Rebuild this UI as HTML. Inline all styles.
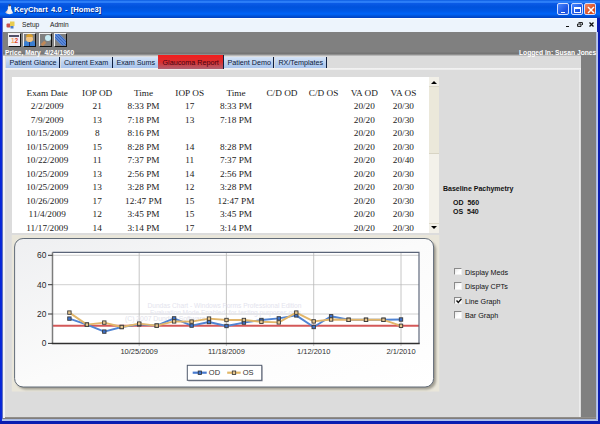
<!DOCTYPE html>
<html><head><meta charset="utf-8">
<style>
*{margin:0;padding:0;box-sizing:border-box}
html,body{width:600px;height:424px;overflow:hidden;background:#0a1cb0;font-family:"Liberation Sans",sans-serif}
.a{position:absolute}
#title{left:0;top:0;width:600px;height:18px;background:linear-gradient(#0c5ce0 0,#1e70f0 1px,#3a8cff 2px,#0a5ae6 3.5px,#0052dc 7px,#0058e6 11px,#0064f8 14px,#0052d8 16px,#0040c0 18px)}
#ttext{left:14px;top:5.3px;color:#fff;font-weight:bold;font-size:7.6px;word-spacing:1.2px;white-space:nowrap;text-shadow:1px 1px 0 #0a3090}
#lblue{left:0;top:18px;width:3px;height:403px;background:linear-gradient(90deg,#0424d8 0,#0a2ad8 1.5px,#6070c0 2.5px,#98a0b8 3px)}
#rblue{left:596px;top:31.5px;width:2px;height:389.5px;background:linear-gradient(90deg,#a8b8d8,#c0ccf8)}
#bblue{left:2px;top:419px;width:596px;height:2px;background:linear-gradient(#a8b8d8,#b0c4f4)}
#menu{left:3px;top:18px;width:594px;height:13.5px;background:#edf4fc}
#tool{left:3px;top:32px;width:593px;height:23px;background:linear-gradient(#808080 0,#808080 20px,#747474 21px,#767676 22px,#a8a8a8 23px)}
#strip{left:3px;top:55px;width:577.5px;height:13px;background:#dcdcdc}
#wline{left:3px;top:68px;width:577.5px;height:2px;background:linear-gradient(#f4f4f4,#ebebeb)}
#panel{left:3px;top:69px;width:577.5px;height:348px;background:#dcdcdc}
#pleft{left:3px;top:55.5px;width:2px;height:362px;background:#eeeeee}
#rgray{left:580.5px;top:55px;width:16px;height:364px;background:#808080}
#bgray{left:3px;top:417px;width:593px;height:2px;background:linear-gradient(#9a9690,#787676)}
.mt{font-size:6.6px;color:#1a1a1a;top:21.3px}
.tab{top:56.5px;height:11px;background:linear-gradient(#d6e4f8,#bcd2f0 50%,#a8c4ec);border-right:1.5px solid #102040;font-size:7.2px;color:#0a1838;line-height:12.6px;white-space:nowrap;padding-left:3.4px}
#table{left:12px;top:76.5px;width:417px;height:156px;background:#fff;overflow:hidden}
.td{position:absolute;width:80px;text-align:center;white-space:nowrap;font-family:"Liberation Serif",serif;font-size:9.25px;line-height:11px;color:#1a1a1a}
#sb{left:429px;top:76.5px;width:9.5px;height:156px;background:#f3f1ea}
.bp{font-size:7px;font-weight:bold;color:#111;white-space:nowrap}
.cb{left:454px;width:8px;height:7.5px;background:linear-gradient(135deg,#e8e8e8,#fff 60%);border-top:1px solid #8a8a8a;border-left:1px solid #8a8a8a;border-right:1px solid #f0f0f0;border-bottom:1px solid #f0f0f0}
.cbt{left:465px;font-size:7.2px;color:#111;white-space:nowrap}
.tbtn{top:3.2px;width:12px;height:12px;border:1px solid #d0dcff;border-radius:2px;background:linear-gradient(135deg,#4a88ff,#1a50e0 70%,#2a60e8)}
.ib{top:33px;width:13px;height:13.5px;border-top:1px solid #f0f0f0;border-left:1px solid #f0f0f0;border-right:1px solid #101010;border-bottom:1px solid #101010;overflow:hidden}
</style></head><body>
<div class="a" id="title"></div>
<svg class="a" style="left:3.5px;top:3.5px" width="10" height="11" viewBox="0 0 10 11"><path d="M5.5,1 C7,1.5 7.5,3 7,4.5 L9,9 C8,10.5 3,10.5 2,9 L4,4.5 C3.5,3 4,1.5 5.5,1Z" fill="#f4f2f0"/><path d="M4.5,0.5 C6,0 7,0.5 7,2 L4.5,2.5Z" fill="#404860"/><path d="M3.5,6 L1,8.5 L3,9Z" fill="#d8c0b8"/></svg>
<div class="a" id="ttext">KeyChart 4.0 - [Home3]</div>
<div class="a tbtn" style="left:557.2px"><div class="a" style="left:2.6px;top:7.4px;width:4px;height:1.8px;background:#fff"></div></div>
<div class="a tbtn" style="left:570.8px"><div class="a" style="left:1.8px;top:2.6px;width:7px;height:6.5px;border:1px solid #fff;border-top-width:2px"></div></div>
<div class="a tbtn" style="left:584px;background:linear-gradient(135deg,#f08868,#d84818 70%,#e05828)"><svg class="a" style="left:1.5px;top:2px" width="8" height="8" viewBox="0 0 8 8"><path d="M1,1 L7,7 M7,1 L1,7" stroke="#fff" stroke-width="1.5"/></svg></div>
<div class="a" id="menu"></div>
<div class="a" style="left:3px;top:18px;width:594px;height:1px;background:#fafcff"></div>
<div class="a" id="tool"></div>
<div class="a" id="strip"></div>
<div class="a" id="panel"></div>
<div class="a" id="wline"></div>
<div class="a" style="left:3px;top:55px;width:577.5px;height:1px;background:#b8b8b8"></div>
<div class="a" style="left:578.5px;top:69px;width:1.6px;height:349px;background:#ececec"></div>
<div class="a" id="rgray"></div>
<div class="a" id="bgray"></div>
<div class="a" id="lblue"></div>
<div class="a" style="left:3.3px;top:55.5px;width:1.6px;height:362.5px;background:#f2f2f2"></div>
<div class="a" id="rblue"></div>
<div class="a" id="bblue"></div>

<svg class="a" style="left:6px;top:20.5px" width="9" height="8" viewBox="0 0 9 8"><rect x="0.5" y="2.5" width="4" height="4" rx="1" fill="#c85050"/><rect x="4" y="0.5" width="4.5" height="4.5" fill="#e8cc50"/><rect x="4.5" y="5" width="3" height="2.5" fill="#4a7cc8"/></svg>
<div class="a mt" style="left:22px">Setup</div>
<div class="a mt" style="left:50px">Admin</div>
<div class="a" style="left:566px;top:25.8px;width:3px;height:1.4px;background:#111"></div>
<svg class="a" style="left:577px;top:22px" width="6" height="5" viewBox="0 0 6 5"><path d="M1.5,0.6 H5.4 V3 M0.6,2 H4 V4.4 H0.6Z" fill="none" stroke="#111" stroke-width="1"/></svg>
<svg class="a" style="left:589px;top:22px" width="5" height="5" viewBox="0 0 5 5"><path d="M0.5,0.5 L4.5,4.5 M4.5,0.5 L0.5,4.5" stroke="#111" stroke-width="1.3"/></svg>

<div class="a ib" style="left:7.6px;background:#f2eef6"><div class="a" style="left:0.5px;top:0.5px;width:10px;height:2px;background:#505068"></div><div class="a" style="left:2.5px;top:4px;font-size:6.5px;font-weight:bold;color:#f0a060;line-height:6px">1</div><div class="a" style="left:6px;top:4px;font-size:6.5px;font-weight:bold;color:#e04828;line-height:6px">2</div></div>
<div class="a ib" style="left:22.8px;background:#808080"><div class="a" style="left:0.5px;top:6.5px;width:10.5px;height:6px;border-radius:2px 2px 0 0;background:#3a7ed0"></div><div class="a" style="left:5px;top:7px;width:1.5px;height:5px;background:#203070"></div><div class="a" style="left:2.5px;top:1.5px;width:6.5px;height:6px;border-radius:3px;background:#f2c482"></div><div class="a" style="left:2px;top:0px;width:7.5px;height:2.8px;border-radius:3px 3px 0 0;background:#d8a030"></div></div>
<div class="a ib" style="left:38.8px;background:#808080"><div class="a" style="left:5px;top:1.2px;width:6px;height:6px;border-radius:50%;background:#c8ecf4"></div><div class="a" style="left:1px;top:7.5px;width:5px;height:3px;background:#c08858;transform:rotate(-45deg)"></div></div>
<div class="a ib" style="left:54px;background:#808080"><svg class="a" style="left:0;top:0" width="11" height="11.5" viewBox="0 0 11 11.5"><path d="M0,0 L4.5,0 L11,6.5 L11,11.5 L6.5,11.5 L0,5 Z" fill="#5a88d8"/><path d="M0.5,0.5 L11,11 M0,3 L8.5,11.5 M3,0 L11,8" stroke="#3060b8" stroke-width="0.8"/></svg></div>

<div class="a" style="left:5px;top:48.6px;color:#fff;font-weight:bold;font-size:6.6px;letter-spacing:0.05px;white-space:nowrap">Price, Mary&nbsp; 4/24/1960</div>
<div class="a" style="left:519px;top:48.5px;color:#fff;font-weight:bold;font-size:6.7px;white-space:nowrap">Logged In: Susan Jones</div>

<div class="a tab" style="left:6px;width:54px">Patient Glance</div>
<div class="a tab" style="left:60.5px;width:52px">Current Exam</div>
<div class="a tab" style="left:113px;width:45px;border-right:none">Exam Sums</div>
<div class="a tab" style="left:158px;top:55.3px;height:13.4px;width:66px;background:linear-gradient(#f41c1c,#d83030 50%,#b06070);color:#480010;line-height:15.8px;padding-left:4.5px">Glaucoma Report</div>
<div class="a tab" style="left:224px;width:50px">Patient Demo</div>
<div class="a tab" style="left:275px;width:52px">RX/Templates</div>

<div class="a" id="table">
<span class="td" style="left:-4.8px;top:11.00px">Exam Date</span>
<span class="td" style="left:45.2px;top:11.00px">IOP OD</span>
<span class="td" style="left:91.5px;top:11.00px">Time</span>
<span class="td" style="left:137.7px;top:11.00px">IOP OS</span>
<span class="td" style="left:184.0px;top:11.00px">Time</span>
<span class="td" style="left:230.0px;top:11.00px">C/D OD</span>
<span class="td" style="left:271.5px;top:11.00px">C/D OS</span>
<span class="td" style="left:312.3px;top:11.00px">VA OD</span>
<span class="td" style="left:351.4px;top:11.00px">VA OS</span>
<span class="td" style="left:-4.8px;top:24.50px">2/2/2009</span>
<span class="td" style="left:45.2px;top:24.50px">21</span>
<span class="td" style="left:91.5px;top:24.50px">8:33 PM</span>
<span class="td" style="left:137.7px;top:24.50px">17</span>
<span class="td" style="left:184.0px;top:24.50px">8:33 PM</span>
<span class="td" style="left:312.3px;top:24.50px">20/20</span>
<span class="td" style="left:351.4px;top:24.50px">20/30</span>
<span class="td" style="left:-4.8px;top:38.00px">7/9/2009</span>
<span class="td" style="left:45.2px;top:38.00px">13</span>
<span class="td" style="left:91.5px;top:38.00px">7:18 PM</span>
<span class="td" style="left:137.7px;top:38.00px">13</span>
<span class="td" style="left:184.0px;top:38.00px">7:18 PM</span>
<span class="td" style="left:312.3px;top:38.00px">20/20</span>
<span class="td" style="left:351.4px;top:38.00px">20/30</span>
<span class="td" style="left:-4.8px;top:51.50px">10/15/2009</span>
<span class="td" style="left:45.2px;top:51.50px">8</span>
<span class="td" style="left:91.5px;top:51.50px">8:16 PM</span>
<span class="td" style="left:312.3px;top:51.50px">20/20</span>
<span class="td" style="left:351.4px;top:51.50px">20/30</span>
<span class="td" style="left:-4.8px;top:65.00px">10/15/2009</span>
<span class="td" style="left:45.2px;top:65.00px">15</span>
<span class="td" style="left:91.5px;top:65.00px">8:28 PM</span>
<span class="td" style="left:137.7px;top:65.00px">14</span>
<span class="td" style="left:184.0px;top:65.00px">8:28 PM</span>
<span class="td" style="left:312.3px;top:65.00px">20/20</span>
<span class="td" style="left:351.4px;top:65.00px">20/30</span>
<span class="td" style="left:-4.8px;top:78.50px">10/22/2009</span>
<span class="td" style="left:45.2px;top:78.50px">11</span>
<span class="td" style="left:91.5px;top:78.50px">7:37 PM</span>
<span class="td" style="left:137.7px;top:78.50px">11</span>
<span class="td" style="left:184.0px;top:78.50px">7:37 PM</span>
<span class="td" style="left:312.3px;top:78.50px">20/20</span>
<span class="td" style="left:351.4px;top:78.50px">20/40</span>
<span class="td" style="left:-4.8px;top:92.00px">10/25/2009</span>
<span class="td" style="left:45.2px;top:92.00px">13</span>
<span class="td" style="left:91.5px;top:92.00px">2:56 PM</span>
<span class="td" style="left:137.7px;top:92.00px">14</span>
<span class="td" style="left:184.0px;top:92.00px">2:56 PM</span>
<span class="td" style="left:312.3px;top:92.00px">20/20</span>
<span class="td" style="left:351.4px;top:92.00px">20/30</span>
<span class="td" style="left:-4.8px;top:105.50px">10/25/2009</span>
<span class="td" style="left:45.2px;top:105.50px">13</span>
<span class="td" style="left:91.5px;top:105.50px">3:28 PM</span>
<span class="td" style="left:137.7px;top:105.50px">12</span>
<span class="td" style="left:184.0px;top:105.50px">3:28 PM</span>
<span class="td" style="left:312.3px;top:105.50px">20/20</span>
<span class="td" style="left:351.4px;top:105.50px">20/30</span>
<span class="td" style="left:-4.8px;top:119.00px">10/26/2009</span>
<span class="td" style="left:45.2px;top:119.00px">17</span>
<span class="td" style="left:91.5px;top:119.00px">12:47 PM</span>
<span class="td" style="left:137.7px;top:119.00px">15</span>
<span class="td" style="left:184.0px;top:119.00px">12:47 PM</span>
<span class="td" style="left:312.3px;top:119.00px">20/20</span>
<span class="td" style="left:351.4px;top:119.00px">20/30</span>
<span class="td" style="left:-4.8px;top:132.50px">11/4/2009</span>
<span class="td" style="left:45.2px;top:132.50px">12</span>
<span class="td" style="left:91.5px;top:132.50px">3:45 PM</span>
<span class="td" style="left:137.7px;top:132.50px">15</span>
<span class="td" style="left:184.0px;top:132.50px">3:45 PM</span>
<span class="td" style="left:312.3px;top:132.50px">20/20</span>
<span class="td" style="left:351.4px;top:132.50px">20/30</span>
<span class="td" style="left:-4.8px;top:146.00px">11/17/2009</span>
<span class="td" style="left:45.2px;top:146.00px">14</span>
<span class="td" style="left:91.5px;top:146.00px">3:14 PM</span>
<span class="td" style="left:137.7px;top:146.00px">17</span>
<span class="td" style="left:184.0px;top:146.00px">3:14 PM</span>
<span class="td" style="left:312.3px;top:146.00px">20/20</span>
<span class="td" style="left:351.4px;top:146.00px">20/30</span>
</div>
<div class="a" id="sb">
<div class="a" style="left:0;top:0;width:9.5px;height:10px;background:#f2f0e8;border-bottom:1px solid #dcd8c8"></div>
<svg class="a" style="left:2px;top:4px" width="6" height="3" viewBox="0 0 6 3"><path d="M3,0 L6,3 H0Z" fill="#000"/></svg>
<div class="a" style="left:0;top:10.3px;width:9.5px;height:67px;background:#ebe8da;border-bottom:1px solid #d8d4c4"></div>
<div class="a" style="left:0;top:146px;width:9.5px;height:10px;background:#f2f0e8;border-top:1px solid #dcd8c8"></div>
<svg class="a" style="left:2px;top:149.5px" width="6" height="3" viewBox="0 0 6 3"><path d="M0,0 H6 L3,3Z" fill="#000"/></svg>
</div>

<svg class="a" style="left:0;top:0" width="600" height="424" viewBox="0 0 600 424">
<defs>
<linearGradient id="bx" x1="0" y1="0" x2="1" y2="1"><stop offset="0" stop-color="#eeeff1"/><stop offset="0.5" stop-color="#fbfbfb"/><stop offset="1" stop-color="#ffffff"/></linearGradient>
<filter id="sh" x="-5%" y="-5%" width="110%" height="115%"><feGaussianBlur stdDeviation="1.3"/></filter>
<linearGradient id="red" x1="0" y1="0" x2="0" y2="1"><stop offset="0" stop-color="#f41818"/><stop offset="0.45" stop-color="#e02828"/><stop offset="1" stop-color="#a86878"/></linearGradient>
</defs>
<rect x="11.8" y="235" width="427.5" height="156.5" fill="#e9e6da"/>
<rect x="16.5" y="240.5" width="419.5" height="149" rx="9" fill="#6e6c60" opacity="0.6" filter="url(#sh)"/>
<rect x="14.6" y="238.5" width="419" height="148.5" rx="8.5" fill="url(#bx)" stroke="#626c78" stroke-width="1"/>
<rect x="52.5" y="252.3" width="366.5" height="91.19999999999999" fill="#fff"/>
<line x1="52.5" y1="314.0" x2="419" y2="314.0" stroke="#c4c4c4" stroke-width="0.8"/><line x1="52.5" y1="284.7" x2="419" y2="284.7" stroke="#c4c4c4" stroke-width="0.8"/><line x1="52.5" y1="255.3" x2="419" y2="255.3" stroke="#c4c4c4" stroke-width="0.8"/><line x1="139.2" y1="252.3" x2="139.2" y2="346.0" stroke="#b8b8b8" stroke-width="0.8"/><line x1="226.4" y1="252.3" x2="226.4" y2="346.0" stroke="#b8b8b8" stroke-width="0.8"/><line x1="313.7" y1="252.3" x2="313.7" y2="346.0" stroke="#b8b8b8" stroke-width="0.8"/><line x1="401.0" y1="252.3" x2="401.0" y2="346.0" stroke="#b8b8b8" stroke-width="0.8"/>
<line x1="52.5" y1="325.8" x2="419" y2="325.8" stroke="#d45858" stroke-width="1.9"/>
<text x="147.5" y="308.3" font-size="6.6" fill="#e4e4ee">Dundas Chart - Windows Forms Professional Edition</text>
<text x="150" y="314.8" font-size="6.6" fill="#e4e4ee">Evaluation Mode Enabled, for testing purposes only</text>
<text x="125" y="321" font-size="6.8" fill="#e2e2ea">(C) 2007 Dundas Software</text>
<polyline points="69.4,318.6 86.9,324.6 104.3,331.6 121.8,327.0 139.2,324.4 156.7,325.6 174.1,318.4 191.6,325.6 209.0,322.0 226.4,326.0 243.9,322.6 261.4,320.0 278.8,318.4 296.2,315.4 313.7,327.0 331.1,316.3 348.6,319.8 366.0,319.8 383.5,319.8 401.0,319.5" fill="none" stroke="#5084d4" stroke-width="1.9" stroke-linejoin="round"/>
<rect x="67.7" y="316.9" width="3.4" height="3.4" fill="#3d72cc" stroke="#3a3a3a" stroke-width="0.9"/><rect x="85.2" y="322.9" width="3.4" height="3.4" fill="#3d72cc" stroke="#3a3a3a" stroke-width="0.9"/><rect x="102.6" y="329.9" width="3.4" height="3.4" fill="#3d72cc" stroke="#3a3a3a" stroke-width="0.9"/><rect x="120.0" y="325.3" width="3.4" height="3.4" fill="#3d72cc" stroke="#3a3a3a" stroke-width="0.9"/><rect x="137.5" y="322.7" width="3.4" height="3.4" fill="#3d72cc" stroke="#3a3a3a" stroke-width="0.9"/><rect x="155.0" y="323.9" width="3.4" height="3.4" fill="#3d72cc" stroke="#3a3a3a" stroke-width="0.9"/><rect x="172.4" y="316.7" width="3.4" height="3.4" fill="#3d72cc" stroke="#3a3a3a" stroke-width="0.9"/><rect x="189.9" y="323.9" width="3.4" height="3.4" fill="#3d72cc" stroke="#3a3a3a" stroke-width="0.9"/><rect x="207.3" y="320.3" width="3.4" height="3.4" fill="#3d72cc" stroke="#3a3a3a" stroke-width="0.9"/><rect x="224.8" y="324.3" width="3.4" height="3.4" fill="#3d72cc" stroke="#3a3a3a" stroke-width="0.9"/><rect x="242.2" y="320.9" width="3.4" height="3.4" fill="#3d72cc" stroke="#3a3a3a" stroke-width="0.9"/><rect x="259.7" y="318.3" width="3.4" height="3.4" fill="#3d72cc" stroke="#3a3a3a" stroke-width="0.9"/><rect x="277.1" y="316.7" width="3.4" height="3.4" fill="#3d72cc" stroke="#3a3a3a" stroke-width="0.9"/><rect x="294.6" y="313.7" width="3.4" height="3.4" fill="#3d72cc" stroke="#3a3a3a" stroke-width="0.9"/><rect x="312.0" y="325.3" width="3.4" height="3.4" fill="#3d72cc" stroke="#3a3a3a" stroke-width="0.9"/><rect x="329.4" y="314.6" width="3.4" height="3.4" fill="#3d72cc" stroke="#3a3a3a" stroke-width="0.9"/><rect x="346.9" y="318.1" width="3.4" height="3.4" fill="#3d72cc" stroke="#3a3a3a" stroke-width="0.9"/><rect x="364.3" y="318.1" width="3.4" height="3.4" fill="#3d72cc" stroke="#3a3a3a" stroke-width="0.9"/><rect x="381.8" y="318.1" width="3.4" height="3.4" fill="#3d72cc" stroke="#3a3a3a" stroke-width="0.9"/><rect x="399.3" y="317.8" width="3.4" height="3.4" fill="#3d72cc" stroke="#3a3a3a" stroke-width="0.9"/>
<polyline points="69.4,312.6 86.9,324.6 104.3,322.6 121.8,327.0 139.2,323.6 156.7,325.6 174.1,321.4 191.6,321.6 209.0,318.6 226.4,320.0 243.9,320.0 261.4,321.8 278.8,322.4 296.2,312.6 313.7,321.4 331.1,319.5 348.6,319.8 366.0,319.8 383.5,319.8 401.0,325.8" fill="none" stroke="#e2b66a" stroke-width="1.9" stroke-linejoin="round"/>
<rect x="67.7" y="310.9" width="3.4" height="3.4" fill="#e8c890" stroke="#3a3a3a" stroke-width="0.9"/><rect x="85.2" y="322.9" width="3.4" height="3.4" fill="#e8c890" stroke="#3a3a3a" stroke-width="0.9"/><rect x="102.6" y="320.9" width="3.4" height="3.4" fill="#e8c890" stroke="#3a3a3a" stroke-width="0.9"/><rect x="120.0" y="325.3" width="3.4" height="3.4" fill="#e8c890" stroke="#3a3a3a" stroke-width="0.9"/><rect x="137.5" y="321.9" width="3.4" height="3.4" fill="#e8c890" stroke="#3a3a3a" stroke-width="0.9"/><rect x="155.0" y="323.9" width="3.4" height="3.4" fill="#e8c890" stroke="#3a3a3a" stroke-width="0.9"/><rect x="172.4" y="319.7" width="3.4" height="3.4" fill="#e8c890" stroke="#3a3a3a" stroke-width="0.9"/><rect x="189.9" y="319.9" width="3.4" height="3.4" fill="#e8c890" stroke="#3a3a3a" stroke-width="0.9"/><rect x="207.3" y="316.9" width="3.4" height="3.4" fill="#e8c890" stroke="#3a3a3a" stroke-width="0.9"/><rect x="224.8" y="318.3" width="3.4" height="3.4" fill="#e8c890" stroke="#3a3a3a" stroke-width="0.9"/><rect x="242.2" y="318.3" width="3.4" height="3.4" fill="#e8c890" stroke="#3a3a3a" stroke-width="0.9"/><rect x="259.7" y="320.1" width="3.4" height="3.4" fill="#e8c890" stroke="#3a3a3a" stroke-width="0.9"/><rect x="277.1" y="320.7" width="3.4" height="3.4" fill="#e8c890" stroke="#3a3a3a" stroke-width="0.9"/><rect x="294.6" y="310.9" width="3.4" height="3.4" fill="#e8c890" stroke="#3a3a3a" stroke-width="0.9"/><rect x="312.0" y="319.7" width="3.4" height="3.4" fill="#e8c890" stroke="#3a3a3a" stroke-width="0.9"/><rect x="329.4" y="317.8" width="3.4" height="3.4" fill="#e8c890" stroke="#3a3a3a" stroke-width="0.9"/><rect x="346.9" y="318.1" width="3.4" height="3.4" fill="#e8c890" stroke="#3a3a3a" stroke-width="0.9"/><rect x="364.3" y="318.1" width="3.4" height="3.4" fill="#e8c890" stroke="#3a3a3a" stroke-width="0.9"/><rect x="381.8" y="318.1" width="3.4" height="3.4" fill="#e8c890" stroke="#3a3a3a" stroke-width="0.9"/><rect x="399.3" y="324.1" width="3.4" height="3.4" fill="#e8c890" stroke="#3a3a3a" stroke-width="0.9"/>
<path d="M52.5,252.3 H419 V343.5" fill="none" stroke="#5a6478" stroke-width="1.15"/>
<line x1="52.5" y1="252.3" x2="52.5" y2="343.5" stroke="#7c7c7c" stroke-width="1.5"/>
<line x1="51.8" y1="343.5" x2="419.7" y2="343.5" stroke="#303030" stroke-width="1.6"/>
<g font-family="Liberation Sans" font-size="8.4" fill="#2a2a2a"><text x="46.3" y="346.3" text-anchor="end">0</text><line x1="48" y1="343.4" x2="52.5" y2="343.4" stroke="#333" stroke-width="1"/><text x="46.3" y="316.9" text-anchor="end">20</text><line x1="48" y1="314.0" x2="52.5" y2="314.0" stroke="#333" stroke-width="1"/><text x="46.3" y="287.6" text-anchor="end">40</text><line x1="48" y1="284.7" x2="52.5" y2="284.7" stroke="#333" stroke-width="1"/><text x="46.3" y="258.2" text-anchor="end">60</text><line x1="48" y1="255.3" x2="52.5" y2="255.3" stroke="#333" stroke-width="1"/></g>
<g font-family="Liberation Sans" font-size="7.5" fill="#303030"><text x="139.2" y="354.2" text-anchor="middle">10/25/2009</text><text x="226.4" y="354.2" text-anchor="middle">11/18/2009</text><text x="313.7" y="354.2" text-anchor="middle">1/12/2010</text><text x="401.0" y="354.2" text-anchor="middle">2/1/2010</text></g>
<rect x="188.3" y="366.2" width="74.3" height="15.2" fill="#a8a8b4"/>
<rect x="187.3" y="365.3" width="74.5" height="15" fill="#fff" stroke="#505a6c" stroke-width="1"/>
<line x1="192.7" y1="372.7" x2="206.7" y2="372.7" stroke="#4a7cd0" stroke-width="2.2"/>
<rect x="198.2" y="371" width="3.4" height="3.4" fill="#3d72cc" stroke="#333" stroke-width="0.8"/>
<line x1="227.2" y1="372.7" x2="240.7" y2="372.7" stroke="#e2b868" stroke-width="2.2"/>
<rect x="232.3" y="371" width="3.4" height="3.4" fill="#e8c890" stroke="#333" stroke-width="0.8"/>
<text x="208.8" y="375.3" font-family="Liberation Sans" font-size="7.5" fill="#303030">OD</text>
<text x="242.7" y="375.3" font-family="Liberation Sans" font-size="7.5" fill="#303030">OS</text>
</svg>

<div class="a bp" style="left:443px;top:184.6px">Baseline Pachymetry</div>
<div class="a bp" style="left:453px;top:199px">OD&nbsp; 560</div>
<div class="a bp" style="left:453px;top:207.6px">OS&nbsp; 540</div>

<div class="a cb" style="top:267.5px"></div><div class="a cbt" style="top:267.8px">Display Meds</div>
<div class="a cb" style="top:282.2px"></div><div class="a cbt" style="top:282px">Display CPTs</div>
<div class="a cb" style="top:296.8px"><svg class="a" style="left:0.5px;top:0.5px" width="6" height="6" viewBox="0 0 6 6"><path d="M0.5,2.5 L2.3,4.5 L5.5,0.8" fill="none" stroke="#111" stroke-width="1.4"/></svg></div><div class="a cbt" style="top:296.8px">Line Graph</div>
<div class="a cb" style="top:311.3px"></div><div class="a cbt" style="top:311.2px">Bar Graph</div>

</body></html>
